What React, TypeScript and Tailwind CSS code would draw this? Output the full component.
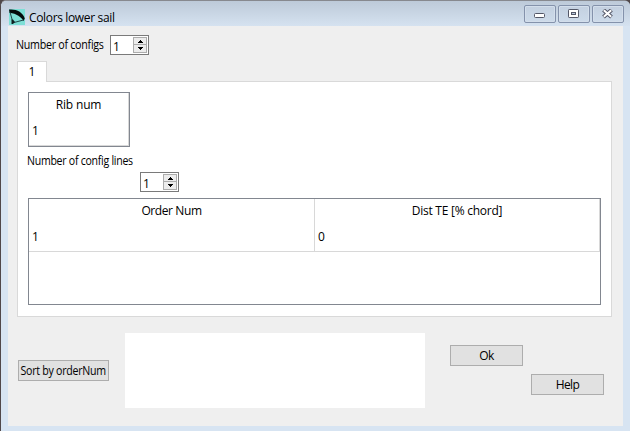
import type { ReactNode } from "react";

function Spin() {
  return (
    <div className="flex h-5 w-[39px] border border-[#7a7a7a] bg-white p-px">
      <span className="w-[21px] pl-px pt-[2px] text-[12px] leading-4">1</span>
      <div className="flex w-[14px] flex-col">
        <div className="flex h-2 items-center justify-center border border-[#acacac] bg-[#ececec]">
          <svg width="5" height="3" viewBox="0 0 5 3" shapeRendering="crispEdges">
            <path d="M2 0h1v1h1v1h1v1H0V2h1V1h1z" />
          </svg>
        </div>
        <div className="flex h-2 items-center justify-center border border-t-0 border-[#acacac] bg-[#ececec]">
          <svg width="5" height="3" viewBox="0 0 5 3" shapeRendering="crispEdges">
            <path d="M0 0h5v1H4v1H3v1H2V2H1V1H0z" />
          </svg>
        </div>
      </div>
    </div>
  );
}

function CaptionButton({ children }: { children: ReactNode }) {
  return (
    <div className="flex h-[18px] w-8 items-center justify-center rounded-[2px] border border-[#8492ab] bg-gradient-to-b from-[#c3d0e0] to-[#cddbea] shadow-[inset_0_0_0_1px_#d3deeb]">
      <svg width="12" height="10" viewBox="0 0 12 10">{children}</svg>
    </div>
  );
}

export default function App() {
  return (
    <div className="flex h-[431px] w-[630px] flex-col overflow-hidden bg-[#50484a] font-['Open_Sans','Noto_Sans',sans-serif] text-[12px] leading-4 whitespace-nowrap text-black">
      <div className="flex min-h-0 flex-1 flex-col rounded-t-[6px] border-l border-t border-[#50484a] border-t-[#87898f] bg-[#d7e4f2]">
        <header className="flex h-[25px] shrink-0 items-start rounded-t-[5px] bg-gradient-to-b from-[#bdcad9] to-[#d5e2f0] pl-2 pr-[6px]">
          <svg className="mt-2 shrink-0" width="16" height="16" viewBox="0 0 16 16">
            <rect width="16" height="16" fill="#7edfd6" />
            <path d="M0 .5C7-.3 14 3 15.800 9.500L14.500 12C12.500 8 7.500 4.500 .5 3.700z" fill="#050b0b" />
            <path d="M1 3 3.500 12M5 13.500 14.500 11" fill="none" stroke="#153638" strokeWidth=".9" />
            <path d="M2.500 10.500h1.500l2 2.500-2 2H2.500z" fill="#102021" />
          </svg>
          <span className="ml-1 mt-[9px] w-[92px] tracking-[-0.35px]">Colors lower sail</span>
          <div className="ml-auto mt-1 flex gap-0.5">
            <CaptionButton>
              <rect x=".5" y="4.500" width="10" height="4" rx="1" fill="#fff" stroke="#535767" />
            </CaptionButton>
            <CaptionButton>
              <rect x=".5" y=".5" width="10" height="8" rx=".7" fill="#fff" stroke="#535767" />
              <rect x="3.500" y="3.500" width="4" height="2" fill="#b9c8dc" stroke="#535767" />
            </CaptionButton>
            <CaptionButton>
              <path d="M1.500 1 9.500 8M9.500 1 1.500 8" stroke="#535767" strokeWidth="4" />
              <path d="M1.800 1.200 9.200 7.800M9.200 1.200 1.800 7.800" stroke="#fff" strokeWidth="2" />
            </CaptionButton>
          </div>
        </header>
        <main className="mb-[5px] ml-[7px] mr-[7px] flex flex-1 flex-col bg-[#efefef]">
          <div className="flex h-[35px] pt-[9px]">
            <span className="ml-[8px] mt-[2px] w-[94px] origin-left scale-x-[0.89] tracking-[-0.3px]">Number of configs</span>
            <Spin />
          </div>
          <div className="z-10 ml-[9px] flex h-[21px] w-[30px] items-center justify-center border border-b-0 border-[#d9d9d9] bg-white">1</div>
          <section className="-mt-px ml-[9px] h-[236px] w-[595px] border border-[#d9d9d9] bg-white pl-2.5 pt-2.5">
            <div className="h-[55px] w-[102px] border border-[#828790]">
              <div className="h-[53px] border-b border-r border-[#d8d8d8]">
                <div className="pt-1 text-center tracking-[-0.15px]">Rib num</div>
                <div className="pl-[3px] pt-[10px]">1</div>
              </div>
            </div>
            <div className="-ml-px mt-[6px] h-[19px] origin-left scale-x-[0.88] tracking-[-0.3px]">Number of config lines</div>
            <div className="ml-28">
              <Spin />
            </div>
            <div className="mt-[6px] h-[107px] w-[573px] border border-[#828790]">
              <div className="grid h-[53px] grid-cols-[286px_285px] border-b border-[#d8d8d8]">
                <div className="border-r border-[#d8d8d8] pt-1">
                  <div className="text-center tracking-[-0.4px]">Order Num</div>
                  <div className="pl-[3px] pt-[10px]">1</div>
                </div>
                <div className="border-r border-[#d8d8d8] pt-1">
                  <div className="text-center tracking-[-0.25px]">Dist TE [% chord]</div>
                  <div className="pl-[3px] pt-[10px]">0</div>
                </div>
              </div>
            </div>
          </section>
          <footer className="flex items-start pl-[10px] pt-4">
            <button className="mt-[27px] flex h-[21px] w-[91px] items-center justify-center border border-[#adadad] bg-[#e1e1e1] tracking-[-0.3px]"><span className="scale-x-[0.885] pt-px">Sort by orderNum</span></button>
            <div className="ml-4 h-[75px] w-[300px] bg-white" />
            <button className="ml-[25px] mt-3 h-[21px] w-[73px] border border-[#adadad] bg-[#e1e1e1] pt-px tracking-[-0.6px]">Ok</button>
            <button className="ml-2 mt-[41px] h-[21px] w-[73px] border border-[#adadad] bg-[#e1e1e1] pt-px tracking-[-0.6px]">Help</button>
          </footer>
        </main>
      </div>
    </div>
  );
}
